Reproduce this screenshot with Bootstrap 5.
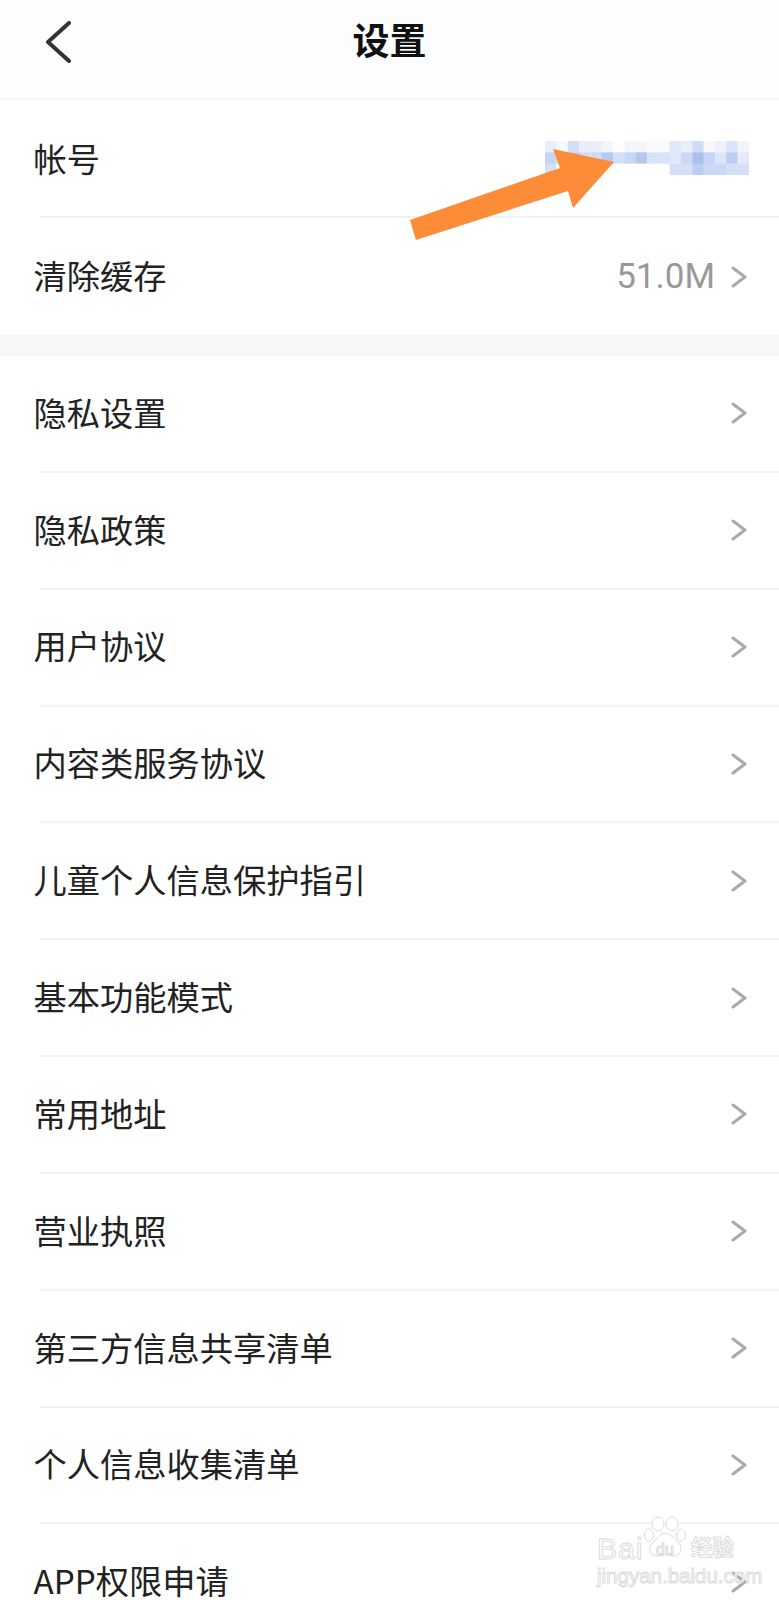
<!DOCTYPE html>
<html lang="zh-CN">

<head>
  <meta charset="UTF-8" />
  <meta name="viewport" content="width=device-width, initial-scale=1" />
  <title>设置</title>
  <link href="https://cdn.jsdelivr.net/npm/bootstrap@5.3.0/dist/css/bootstrap.min.css" rel="stylesheet" />
  <style>
    html, body {
      height: 1600px;
      overflow: hidden;
    }

    body {
      position: relative;
      background: #fff;
      color: #222;
      font-family: "Noto Sans CJK SC", "Noto Sans", sans-serif;
    }

    .top-head {
      height: 100px;
      background: #fdfdfd;
      border-bottom: 2px solid #f6f6f6;
    }

    .back-btn {
      left: 45px;
      top: 21px;
    }

    .head-title {
      font-size: 37px;
      font-weight: 700;
      line-height: 1;
      color: #111;
      margin-bottom: 19px;
    }

    .set-row {
      height: 114.85px;
      padding: 0 32px 0 33.5px;
      font-size: 33.25px;
      line-height: 1;
    }

    .row-label {
      padding-bottom: 4px;
    }

    .row-first {
      height: 116px;
    }

    .row-first .row-label {
      padding-bottom: 0;
    }

    .row-second {
      height: 117px;
    }

    .sep {
      height: 2px;
      margin-left: 40px;
      background: #f3f3f3;
    }

    .band {
      height: 21px;
      background: #f6f7f9;
    }

    .size-val {
      color: #999;
      font-family: Roboto, sans-serif;
      font-size: 35px;
      margin-right: 16px;
    }

    .acct-blur {
      display: block;
      margin-right: -2px;
    }

    .point-arrow {
      left: 0;
      top: 0;
      pointer-events: none;
    }

    .mark-wrap {
      left: 596px;
      top: 1515px;
      width: 145px;
      height: 72px;
      pointer-events: none;
    }

    .mark-bai, .mark-cn, .mark-url, .mark-du {
      color: #fff;
      -webkit-text-stroke: 1px #dcdcdc;
      line-height: 1;
      white-space: nowrap;
    }

    .mark-bai {
      left: 1px;
      top: 19px;
      font-family: "Liberation Sans", sans-serif;
      font-size: 30px;
      letter-spacing: 1px;
    }

    .mark-du {
      left: 60px;
      top: 27px;
      font-family: "Liberation Sans", sans-serif;
      font-size: 16px;
    }

    .mark-cn {
      left: 95px;
      top: 20px;
      font-size: 21.5px;
      font-weight: 700;
    }

    .mark-url {
      left: 1px;
      top: 51px;
      font-family: "Liberation Sans", sans-serif;
      font-size: 20.5px;
    }

    .mark-paw {
      left: 48px;
      top: 1px;
    }
  </style>
</head>

<body>
  <header class="top-head d-flex align-items-center justify-content-center position-relative">
    <svg class="back-btn position-absolute" width="26" height="42" viewBox="0 0 26 42" fill="none">
      <path d="M24 2 3 21l21 19" stroke="#333" stroke-width="4" stroke-linecap="round" stroke-linejoin="round" />
    </svg>
    <div class="head-title">设置</div>
  </header>

  <div class="set-row row-first d-flex align-items-center justify-content-between">
    <span class="row-label">帐号</span>
    <svg class="acct-blur" id="acctBlur" width="204" height="34" viewBox="0 0 204 34"></svg>
  </div>
  <div class="sep"></div>
  <div class="set-row row-second d-flex align-items-center justify-content-between">
    <span class="row-label">清除缓存</span>
    <span class="d-flex align-items-center">
      <span class="size-val">51.0M</span>
      <svg width="16" height="22" viewBox="0 0 16 22" fill="none"><path d="M2 2l12 9-12 9" stroke="#aaa" stroke-width="3" stroke-linecap="round" stroke-linejoin="round" /></svg>
    </span>
  </div>
  <div class="band"></div>

  <div id="menuList"></div>

  <svg class="point-arrow position-absolute" width="779" height="260" viewBox="0 0 779 260">
    <polygon points="410,220 416,240 568,191 573,208 614,162 553,149 560,168" fill="#fd8c38" />
  </svg>

  <div class="mark-wrap position-absolute">
    <svg class="mark-paw position-absolute" width="44" height="44" viewBox="0 0 44 44" fill="#fff" stroke="#dcdcdc" stroke-width="1">
      <ellipse cx="14" cy="8" rx="6" ry="7" />
      <ellipse cx="28" cy="8" rx="6" ry="7" />
      <ellipse cx="5" cy="19" rx="4.5" ry="6" />
      <ellipse cx="37" cy="19" rx="4.5" ry="6" />
      <path d="M21 17c-6 0-8 6-13 10-5 5-2 14 6 13 3 0 5-1 7-1s5 1 8 1c8 0 10-8 6-13-5-4-8-10-14-10z" />
    </svg>
    <span class="mark-bai position-absolute">Bai</span>
    <span class="mark-du position-absolute">du</span>
    <span class="mark-cn position-absolute">经验</span>
    <span class="mark-url position-absolute">jingyan.baidu.com</span>
  </div>

  <script src="https://cdn.jsdelivr.net/npm/bootstrap@5.3.0/dist/js/bootstrap.bundle.min.js"></script>
  <script>
    const menuItems = ['隐私设置', '隐私政策', '用户协议', '内容类服务协议', '儿童个人信息保护指引', '基本功能模式', '常用地址', '营业执照', '第三方信息共享清单', '个人信息收集清单', 'APP权限申请'];
    const chevron = '<svg width="16" height="22" viewBox="0 0 16 22" fill="none"><path d="M2 2l12 9-12 9" stroke="#aaa" stroke-width="3" stroke-linecap="round" stroke-linejoin="round" /></svg>';

    document.getElementById('menuList').innerHTML = menuItems.map(name => `
      <div class="set-row d-flex align-items-center justify-content-between">
        <span class="row-label">${name}</span>${chevron}
      </div>
      <div class="sep"></div>`).join('');

    // pixelated account name, one row of block colours per line
    const blurRows = [
      ['#e8eefb', '#f8f9fe', '#d5e0f8', '#e8eefb', '#e8eefb', '#f3f6fd', '#ffffff', '#f4f6fd', '#f4f6fd', '#fafbfe', '#fafbfe', '#dfe7f9', '#e8eefb', '#cfdcf7', '#f6f8fe', '#eef2fc', '#d9e3f9', '#f0f3fc'],
      ['#c6d5f5', '#d0dcf6', '#bccdf3', '#cfdbf6', '#cfdbf6', '#b5c8f2', '#d5e0f8', '#c8d6f5', '#b5c7f1', '#d8e2f8', '#d8e2f8', '#dfe7f9', '#ccd9f6', '#aabff0', '#c6d4f5', '#dce5f9', '#bccdf3', '#e4eafb'],
      ['#d5e0f8', '#ffffff', '#ffffff', '#ffffff', '#ffffff', '#ffffff', '#ffffff', '#ffffff', '#ffffff', '#ffffff', '#ffffff', '#d5e0f8', '#d5e0f8', '#bccdf3', '#ccd9f6', '#ccd9f6', '#d3dff8', '#d3dff8']
    ];
    document.getElementById('acctBlur').innerHTML = blurRows.map((cols, y) =>
      cols.map((c, x) => `<rect x="${x * 11.33}" y="${y * 11.33}" width="11.6" height="11.6" fill="${c}" />`).join('')
    ).join('');
  </script>
</body>

</html>
